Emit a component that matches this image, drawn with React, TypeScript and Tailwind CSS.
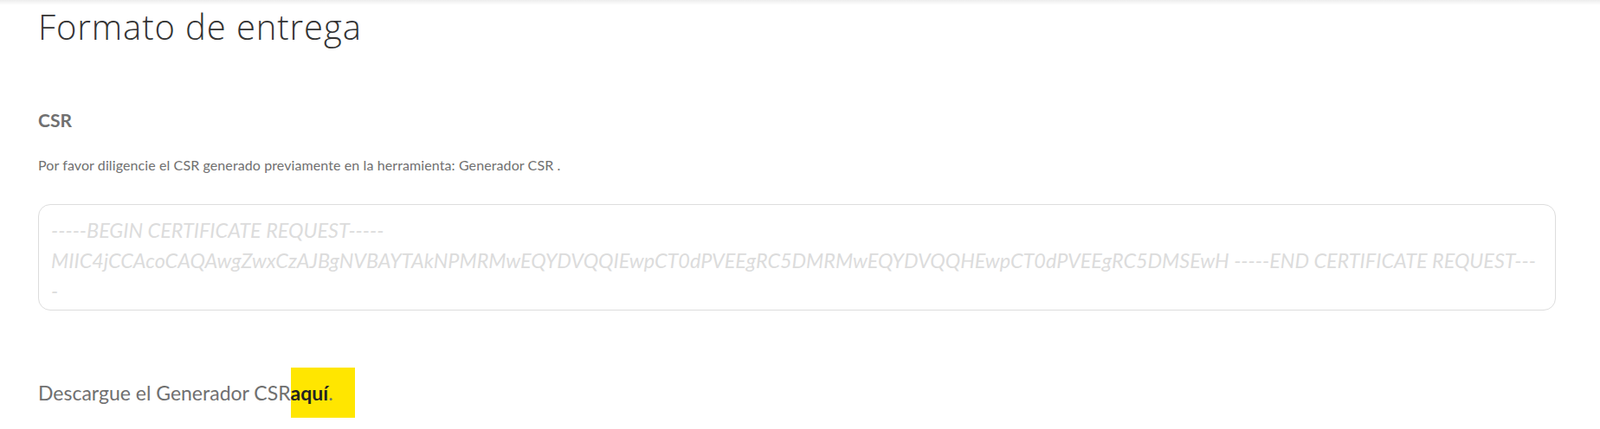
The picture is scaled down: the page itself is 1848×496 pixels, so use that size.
import React from "react";

const csrPlaceholder =
    "-----BEGIN CERTIFICATE REQUEST-----\n" +
    "MIIC4jCCAcoCAQAwgZwxCzAJBgNVBAYTAkNPMRMwEQYDVQQIEwpCT0dPVEEgRC5DMRMwEQYDVQQHEwpCT0dPVEEgRC5DMSEwH -----END CERTIFICATE REQUEST----\n" +
    "-";

export default function App() {
    return (
        <div className="min-h-[496px] bg-white font-['Lato',sans-serif]">
            {/* header shadow */}
            <div className="h-[6px] bg-gradient-to-b from-[#ededed] to-white" />

            <div className="pl-[44px] pr-[51px]">
                <h1 className="mt-[1px] text-[40px] leading-[48px] font-light tracking-[0.9px] text-[#333333] font-['Open_Sans',sans-serif]">
                    Formato de entrega
                </h1>

                {/* CSR */}
                <section className="mt-[70px]">
                    <h2 className="text-[21px] leading-[28px] font-bold text-[#707070]">CSR</h2>
                    <p className="mt-[27px] text-[16px] leading-[22px] tracking-[0.1px] text-[#707070]">
                        Por favor diligencie el CSR generado previamente en la herramienta: Generador CSR .
                    </p>
                    <textarea
                        className="mt-[34px] block h-[123px] w-full resize-none overflow-hidden rounded-[14px] border border-[#dddddd] px-[14px] pt-[12px] text-[23.4px] leading-[35px] italic text-[#555] outline-none placeholder:text-[#dcdcdc]"
                        placeholder={csrPlaceholder}
                    />
                </section>

                <p className="mt-[66px] text-[23px] leading-[58px] text-[#707070]">
                    Descargue el Generador CSR
                    <a className="inline-block bg-[#ffe600] pr-[25px] text-[#707070]">
                        <strong className="font-bold text-[#222222]">aquí</strong>.
                    </a>
                </p>
            </div>
        </div>
    );
}
